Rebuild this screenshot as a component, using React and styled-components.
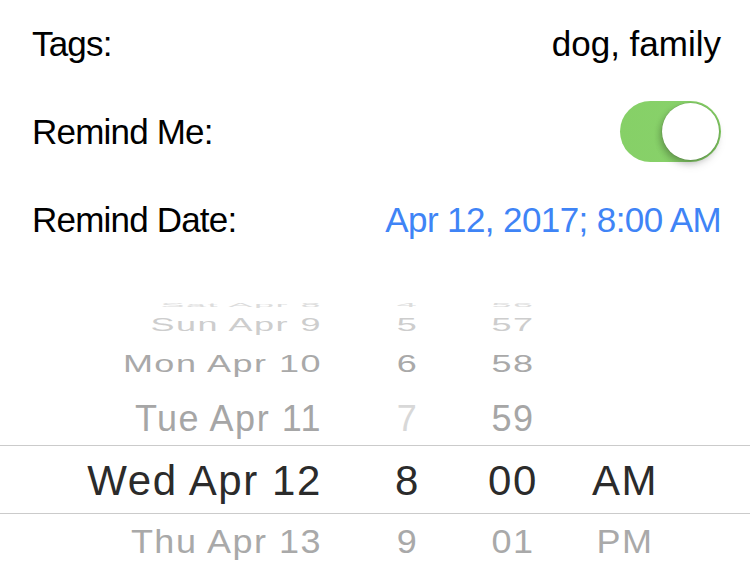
import React from 'react'
import styled, { createGlobalStyle } from 'styled-components'

const GlobalStyle = createGlobalStyle`
  html, body {
    margin: 0;
    padding: 0;
    background: #fff;
  }
  body {
    font-family: 'Liberation Sans', Arial, sans-serif;
    -webkit-font-smoothing: antialiased;
  }
`

const wheelRows = [
  { date: 'Sat Apr 8', hour: '4', minute: '56', h: 18, sy: 0.16, tone: '#dcdcdc' },
  { date: 'Sun Apr 9', hour: '5', minute: '57', h: 22, sy: 0.5, tone: '#cdcdcd' },
  { date: 'Mon Apr 10', hour: '6', minute: '58', h: 56, sy: 0.67, tone: '#a9a9a9' },
  { date: 'Tue Apr 11', hour: '7', minute: '59', h: 53, sy: 1, tone: '#a6a6a6', hourTone: '#d8d8d8' },
  { date: 'Wed Apr 12', hour: '8', minute: '00', ampm: 'AM', h: 69, sy: 1, selected: true },
  { date: 'Thu Apr 13', hour: '9', minute: '01', ampm: 'PM', h: 56, sy: 0.9, tone: '#a9a9a9' }
]

export default function App () {
  return <Screen>
    <GlobalStyle />
    <Form>
      <FormRow>
        <Label>Tags:</Label>
        <Value>dog, family</Value>
      </FormRow>
      <FormRow>
        <Label>Remind Me:</Label>
        <Toggle $on>
          <Knob />
        </Toggle>
      </FormRow>
      <FormRow>
        <Label>Remind Date:</Label>
        <Value $link>Apr 12, 2017; 8:00 AM</Value>
      </FormRow>
    </Form>

    <Wheel>
      {
        wheelRows.map(row => (
          <WheelRow key={row.date} $h={row.h} $selected={row.selected}>
            <DateCell $sy={row.sy} $tone={row.tone} $selected={row.selected}>{ row.date }</DateCell>
            <HourCell $sy={row.sy} $tone={row.hourTone || row.tone} $selected={row.selected}>{ row.hour }</HourCell>
            <MinuteCell $sy={row.sy} $tone={row.tone} $selected={row.selected}>{ row.minute }</MinuteCell>
            <AmPmCell $sy={row.sy} $tone={row.tone} $selected={row.selected}>{ row.ampm || '' }</AmPmCell>
          </WheelRow>
        ))
      }
    </Wheel>
  </Screen>
}

const Screen = styled('div')`
  width: 750px;
  height: 572px;
  overflow: hidden;
  background: #fff;
  display: flex;
  flex-direction: column;
`

const Form = styled('div')`
  display: flex;
  flex-direction: column;
  padding: 0 29px 0 32px;
`

const FormRow = styled('div')`
  height: 88px;
  display: flex;
  align-items: center;
  justify-content: space-between;
`

const Label = styled('span')`
  font-size: 35px;
  letter-spacing: -0.8px;
  color: #000;
`

const Value = styled('span')`
  font-size: 35px;
  letter-spacing: ${p => p.$link ? '-0.6px' : '0'};
  color: ${p => p.$link ? '#3f84f6' : '#000'};
`

const Toggle = styled('div')`
  width: 101px;
  height: 61px;
  border-radius: 31px;
  background: ${p => p.$on ? 'linear-gradient(90deg, #86d067 0%, #88d16a 60%, #7fc95f 100%)' : '#e5e5e5'};
  display: flex;
  align-items: center;
  justify-content: ${p => p.$on ? 'flex-end' : 'flex-start'};
  padding: 0 2px;
  box-sizing: border-box;
  margin-top: -2px;
`

const Knob = styled('div')`
  width: 57px;
  height: 57px;
  border-radius: 50%;
  background: #fff;
  box-shadow: 0 0 0 0.5px rgba(0, 0, 0, 0.12), -2px 3px 6px rgba(0, 0, 0, 0.22), 0 6px 10px rgba(0, 0, 0, 0.08);
`

const Wheel = styled('div')`
  margin-top: 32px;
  display: flex;
  flex-direction: column;
`

const WheelRow = styled('div')`
  height: ${p => p.$h}px;
  box-sizing: border-box;
  display: flex;
  align-items: center;
  border-top: ${p => p.$selected ? '1px solid #cbcbcb' : 'none'};
  border-bottom: ${p => p.$selected ? '1px solid #cbcbcb' : 'none'};
`

const Cell = styled('div')`
  flex: none;
  line-height: 1;
  white-space: nowrap;
  font-size: ${p => p.$selected ? 42 : 36}px;
  letter-spacing: ${p => p.$selected ? 1.6 : 1.5}px;
  color: ${p => p.$selected ? '#2b2b2b' : p.$tone};
  transform: scaleY(${p => p.$sy});
  transform-origin: center;
  margin-top: ${p => p.$selected ? 3 : 0}px;
`

const DateCell = styled(Cell)`
  width: 322px;
  padding-right: 22px;
  text-align: right;
`

const HourCell = styled(Cell)`
  width: 127px;
  text-align: center;
`

const MinuteCell = styled(Cell)`
  width: 84px;
  text-align: center;
`

const AmPmCell = styled(Cell)`
  width: 140px;
  text-align: center;
`
